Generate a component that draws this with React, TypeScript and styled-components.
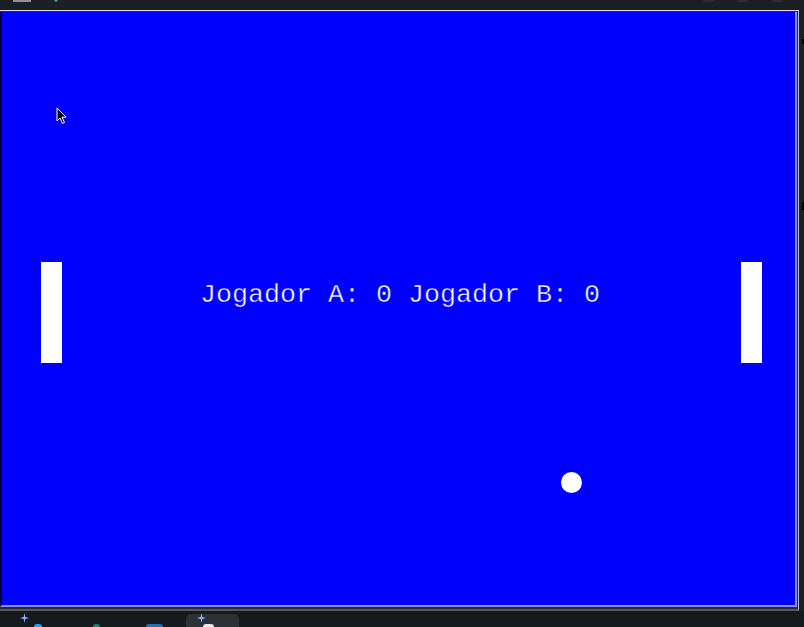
import React from "react";
import styled, { createGlobalStyle } from "styled-components";

const Global = createGlobalStyle`
  html, body { margin: 0; padding: 0; background: #1c1f24; overflow: hidden; }
  #root { width: 804px; height: 627px; }
`;

const Screen = styled.div`
  width: 804px;
  height: 627px;
  display: flex;
  flex-direction: column;
  background: #1c1f24;
`;

const TopBar = styled.div`
  height: 10px;
  flex: none;
  display: flex;
  justify-content: space-between;
  align-items: flex-start;
  padding: 0 21px 0 13px;
  background: #1c1f24;
`;

const MarkGroup = styled.div<{ $gap: number }>`
  display: flex;
  gap: ${(p) => p.$gap}px;
`;

const TopMark = styled.span<{ $w: number; $c: string; $round?: boolean }>`
  width: ${(p) => p.$w}px;
  height: 2px;
  background: ${(p) => p.$c};
  border-radius: ${(p) => (p.$round ? "0 0 6px 6px" : "0")};
`;

const WindowRow = styled.div`
  display: flex;
  flex: none;
`;

const Frame = styled.div`
  width: 799px;
  box-sizing: border-box;
  background: #2a2a2c;
  border-top: 1px solid #dcdcdc;
  border-right: 1px solid #bcbcbc;
  border-bottom: 2px solid #5a5a5c;
  padding: 1px 1px 2px 0;
`;

const Side = styled.div`
  flex: 1;
  display: flex;
  flex-direction: column;
  align-items: flex-end;
  padding-top: 29px;
  gap: 158px;
`;

const Notch = styled.span<{ $h: number }>`
  width: 2px;
  height: ${(p) => p.$h}px;
  background: #000;
`;

const Canvas = styled.div`
  position: relative;
  width: 797px;
  height: 595px;
  box-sizing: border-box;
  background: #0000ff;
  border-left: 2px solid #00003a;
  border-right: 2px solid #8c8cf8;
  border-bottom: 2px solid #8c8cf8;
  overflow: hidden;
`;

const Paddle = styled.div<{ $x: number; $y: number }>`
  position: absolute;
  left: ${(p) => p.$x}px;
  top: ${(p) => p.$y}px;
  width: 21px;
  height: 101px;
  background: #ffffff;
`;

const Ball = styled.div<{ $x: number; $y: number }>`
  position: absolute;
  left: ${(p) => p.$x}px;
  top: ${(p) => p.$y}px;
  width: 21px;
  height: 21px;
  border-radius: 50%;
  background: #ffffff;
`;

const Score = styled.div<{ $x: number; $y: number }>`
  position: absolute;
  left: ${(p) => p.$x}px;
  top: ${(p) => p.$y}px;
  font-family: "Liberation Mono", "Courier New", monospace;
  font-size: 26.67px;
  line-height: 30px;
  color: #ffffff;
  -webkit-text-stroke: 0.45px #0000ff;
  white-space: pre;
`;

const Cursor = styled.svg<{ $x: number; $y: number }>`
  position: absolute;
  left: ${(p) => p.$x}px;
  top: ${(p) => p.$y}px;
`;

const Taskbar = styled.div`
  flex: 1;
  display: flex;
  align-items: flex-end;
  padding-left: 9px;
  background: #151a1f;
`;

const Slot = styled.div<{ $active?: boolean }>`
  position: relative;
  width: 58px;
  height: 13px;
  display: flex;
  justify-content: center;
  align-items: flex-end;
  border-radius: 5px 5px 0 0;
  background: ${(p) => (p.$active ? "#2c3138" : "transparent")};
  box-sizing: border-box;
`;

const Sparkle = styled.svg`
  position: absolute;
  left: 11px;
  top: -1px;
`;

const TrayIcon = styled.span<{ $w: number; $c: string }>`
  width: ${(p) => p.$w}px;
  height: 3px;
  border-radius: 3px 3px 0 0;
  background: ${(p) => p.$c};
`;

const ActiveSlot = styled(Slot)`
  width: 53px;
  margin-left: 3px;
  justify-content: flex-start;
  padding-left: 17px;
`;

function Star() {
  return (
    <Sparkle width="9" height="10" viewBox="0 0 9 10">
      <path
        d="M4.5 0 L5.3 4.1 L9 5 L5.3 5.9 L4.5 10 L3.7 5.9 L0 5 L3.7 4.1 Z"
        fill="#8ab4f8"
      />
    </Sparkle>
  );
}

export default function App() {
  return (
    <Screen>
      <Global />
      <TopBar>
        <MarkGroup $gap={23}>
          <TopMark $w={18} $c="#8e9196" />
          <TopMark $w={4} $c="#3f8f80" $round />
        </MarkGroup>
        <MarkGroup $gap={22}>
          <TopMark $w={12} $c="#2b2e33" $round />
          <TopMark $w={12} $c="#2b2e33" $round />
          <TopMark $w={12} $c="#2b2e33" $round />
        </MarkGroup>
      </TopBar>
      <WindowRow>
        <Frame>
          <Canvas>
            <Paddle $x={39} $y={250} />
            <Paddle $x={739} $y={250} />
            <Score $x={198} $y={268}>Jogador A: 0 Jogador B: 0</Score>
            <Ball $x={559} $y={460} />
            <Cursor $x={54} $y={95} width="12" height="18" viewBox="0 0 12 18">
              <path
                d="M1 1 L1 14 L4 11 L6.5 16.5 L8.5 15.5 L6 10.2 L10 10.2 Z"
                fill="#000"
                stroke="#fff"
                strokeWidth="1"
                strokeLinejoin="round"
              />
            </Cursor>
          </Canvas>
        </Frame>
        <Side>
          <Notch $h={5} />
          <Notch $h={8} />
        </Side>
      </WindowRow>
      <Taskbar>
        <Slot>
          <Star />
          <TrayIcon $w={8} $c="#2aa3e6" />
        </Slot>
        <Slot>
          <TrayIcon $w={7} $c="#2a7a6c" />
        </Slot>
        <Slot>
          <TrayIcon $w={17} $c="#2b6fa8" />
        </Slot>
        <ActiveSlot $active>
          <Star />
          <TrayIcon $w={11} $c="#e8e8e8" />
        </ActiveSlot>
      </Taskbar>
    </Screen>
  );
}
